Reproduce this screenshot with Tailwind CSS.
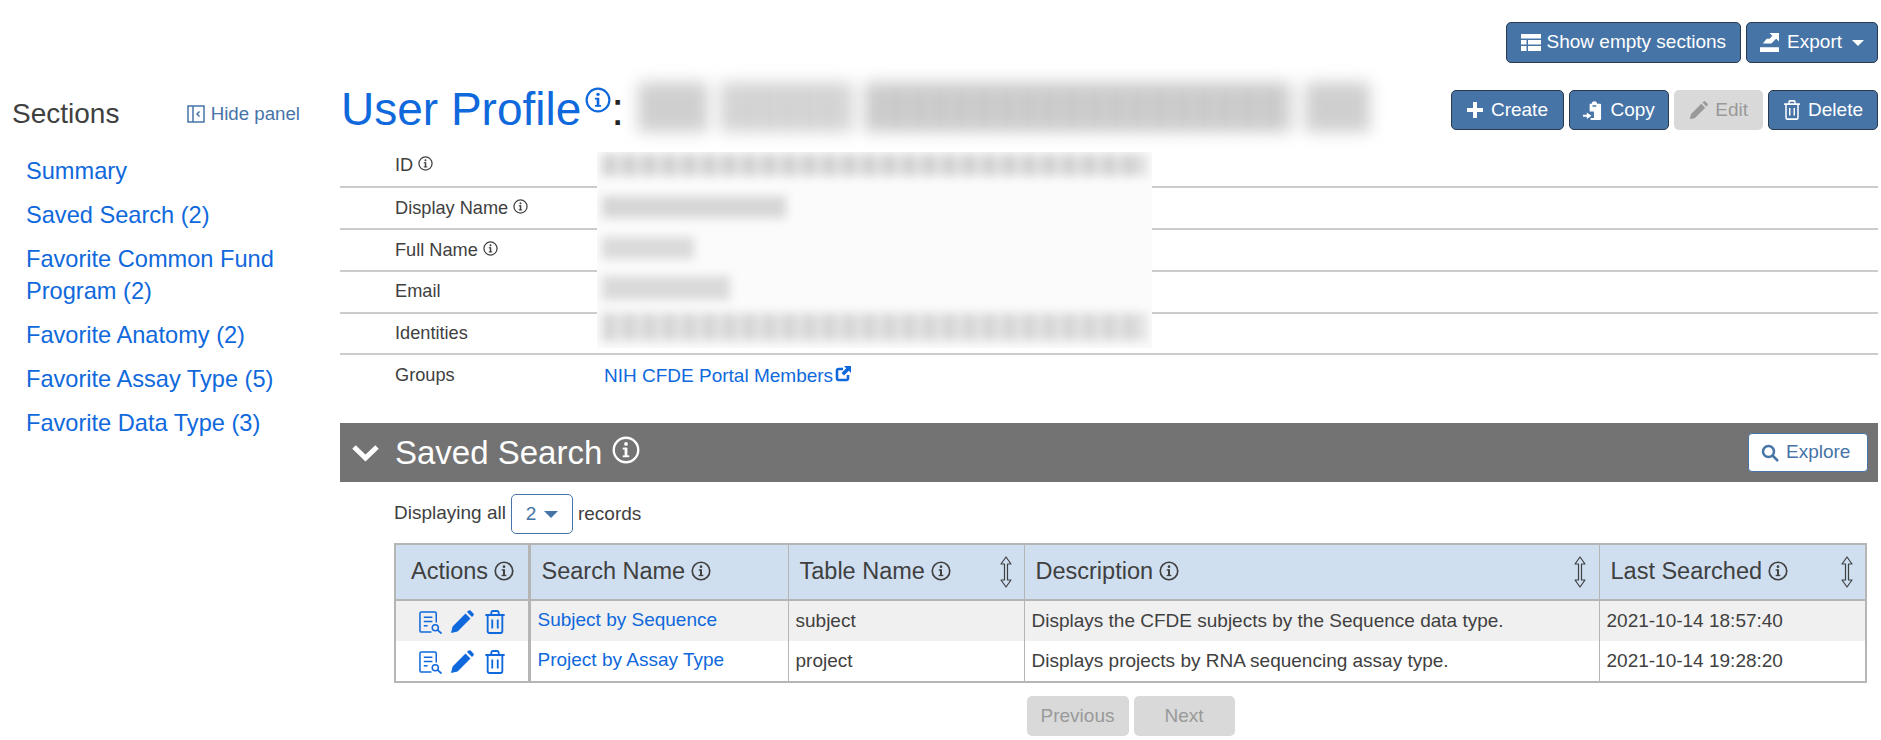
<!DOCTYPE html>
<html lang="en">
<head>
    <meta charset="UTF-8">
    <title>User Profile</title>
    <script src="https://cdn.jsdelivr.net/npm/@tailwindcss/browser@4"></script>
</head>
<body class="bg-white font-['Liberation_Sans',Arial,sans-serif] text-[19px] text-[#404040] overflow-hidden">
    <!-- shared icons -->
    <svg class="hidden">
        <symbol id="info" viewBox="0 0 24 24">
            <circle cx="12" cy="12" r="10.5" fill="none" stroke="currentColor" stroke-width="2"/>
            <rect x="10.8" y="10" width="2.4" height="8" fill="currentColor"/>
            <rect x="9.2" y="10" width="3" height="1.6" fill="currentColor"/>
            <rect x="9.2" y="16.6" width="5.6" height="1.6" fill="currentColor"/>
            <circle cx="12" cy="6.8" r="1.6" fill="currentColor"/>
        </symbol>
        <symbol id="pencil" viewBox="0 0 24 24">
            <path fill="currentColor" d="M1 23l1.6-6.6L15.5 3.5l5 5L7.6 21.4zM17 2l1.6-1.4a1.5 1.5 0 0 1 2 0l2.8 2.8a1.5 1.5 0 0 1 0 2L22 7z"/>
        </symbol>
        <symbol id="trash" viewBox="0 0 24 24" preserveAspectRatio="none">
            <path fill="none" stroke="currentColor" stroke-width="2" d="M1.5 5h21M8 5V2.500A1.500 1.500 0 0 1 9.500 1h5A1.500 1.500 0 0 1 16 2.500V5M4 5v16a2 2 0 0 0 2 2h12a2 2 0 0 0 2-2V5M9 9.500v9M15 9.500v9"/>
        </symbol>
        <symbol id="view" viewBox="0 0 24 24">
            <path fill="none" stroke="currentColor" stroke-width="1.6" d="M13 22H2.500A1.500 1.500 0 0 1 1 20.500V2.500A1.500 1.500 0 0 1 2.500 1h14A1.500 1.500 0 0 1 18 2.500V12M5 6.500h9M5 11h9M5 15.500h4"/>
            <circle cx="17" cy="17.500" r="3.200" fill="none" stroke="currentColor" stroke-width="1.600"/>
            <path stroke="currentColor" stroke-width="1.800" d="M19.500 20l4 3.500"/>
        </symbol>
        <symbol id="sort" viewBox="0 0 14 32">
            <path fill="none" stroke="currentColor" stroke-width="1.200" stroke-linejoin="round" d="M7 1L2 8h3.500v16H2l5 7 5-7H8.500V8H12z"/>
        </symbol>
    </svg>

    <div class="flex w-[1881px] h-[740px]">
        <!-- Sections panel -->
        <aside class="w-[340px] shrink-0 pt-[97px]">
            <div class="flex items-center justify-between pl-3 pr-[40px] h-[34px]">
                <h2 class="text-[28px]">Sections</h2>
                <a class="flex items-center gap-[6px] text-[#4674a7] text-[18.700px]">
                    <svg class="w-[18px] h-[18px]" viewBox="0 0 18 18" fill="none" stroke="currentColor" stroke-width="1.500">
                        <rect x="1" y="1" width="16" height="16"/><path d="M6 1v16M12.500 6.500l-2.500 2.500 2.500 2.500"/>
                    </svg>
                    Hide panel
                </a>
            </div>
            <nav class="mt-[24px] pl-[26px] pr-[14px] flex flex-col gap-[12px] text-[23.600px] leading-[32px] text-[#0f69dc]">
                <a>Summary</a>
                <a>Saved Search (2)</a>
                <a>Favorite Common Fund Program (2)</a>
                <a>Favorite Anatomy (2)</a>
                <a>Favorite Assay Type (5)</a>
                <a>Favorite Data Type (3)</a>
            </nav>
        </aside>

        <main class="flex-1 pr-[3px] min-w-0">
            <!-- Page level buttons -->
            <div class="flex justify-end gap-[5px] pt-[22px] h-[90px]">
                <button class="flex items-center gap-[6px] h-[41px] px-[14px] bg-[#4674a7] border border-[#2b3b4d] rounded-[5px] text-white">
                    <svg class="w-5 h-[17px]" viewBox="0 0 20 17" fill="currentColor"><path d="M0 0h20v4.500H0zM0 6h5.500v4.500H0zM7 6h13v4.500H7zM0 12h5.500v5H0zM7 12h13v5H7z"/></svg>
                    Show empty sections
                </button>
                <button class="flex items-center gap-[8px] h-[41px] px-[13px] bg-[#4674a7] border border-[#2b3b4d] rounded-[5px] text-white">
                    <svg class="w-[19px] h-[19px]" viewBox="0 0 20 20" fill="currentColor"><path d="M0 15h20v5H0zM20 0v9l-3-3-5 5H3l4-5h3l3-3-3-3z"/></svg>
                    Export
                    <span class="w-0 h-0 ml-[2px] border-x-[6px] border-x-transparent border-t-[6px] border-t-white"></span>
                </button>
            </div>

            <!-- Title -->
            <div class="flex items-start justify-between pl-[1px] h-[60px]">
                <div class="flex items-start">
                    <h1 class="text-[46px] leading-[64px] text-[#0f69dc] -mt-[13px]">User Profile</h1>
                    <svg class="w-[26px] h-[26px] -mt-[3px] ml-[4px] text-[#0f69dc]"><use href="#info"/></svg>
                    <span class="text-[46px] leading-[64px] -mt-[13px] text-[#222]">:</span>
                    <div class="ml-[14px] -mt-[8px] flex gap-[14px] h-[50px] w-[732px] blur-[8px]">
                        <div class="w-[70px] bg-[#cfcfcf]"></div>
                        <div class="w-[130px] bg-[repeating-linear-gradient(90deg,#cbcbcb_0,#cbcbcb_14px,#e8e8e8_14px,#e8e8e8_20px)]"></div>
                        <div class="flex-1 bg-[repeating-linear-gradient(90deg,#c4c4c4_0,#c4c4c4_16px,#dedede_16px,#dedede_22px)]"></div>
                        <div class="w-[65px] bg-[#cfcfcf]"></div>
                    </div>
                </div>
                <div class="flex gap-[5px]">
                    <button class="flex items-center gap-[8px] h-[40px] px-[15px] bg-[#4674a7] border border-[#2b3b4d] rounded-[5px] text-white">
                        <svg class="w-4 h-4" viewBox="0 0 16 16" fill="currentColor"><path d="M6 0h4v6h6v4h-6v6H6v-6H0V6h6z"/></svg>
                        Create
                    </button>
                    <button class="flex items-center gap-[8px] h-[40px] px-[13.500px] bg-[#4674a7] border border-[#2b3b4d] rounded-[5px] text-white">
                        <svg class="w-[19px] h-[19px]" viewBox="0 0 20 20" fill="currentColor"><path fill-rule="evenodd" d="M7 3h2.200a2.800 2.800 0 0 1 5.600 0H18a1 1 0 0 1 1 1v15a1 1 0 0 1-1 1H8v-2h3.500v-7H7zM10 4.500h4V6h-4z"/><path d="M0 14.500h4V12l5 3.500L4 19v-2.500H0z"/></svg>
                        Copy
                    </button>
                    <button class="flex items-center gap-[7px] h-[40px] px-[15px] bg-[#d9d9d9] rounded-[5px] text-[#999]">
                        <svg class="w-[19px] h-[19px]"><use href="#pencil"/></svg>
                        Edit
                    </button>
                    <button class="flex items-center gap-[7px] h-[40px] px-[14px] bg-[#4674a7] border border-[#2b3b4d] rounded-[5px] text-white">
                        <svg class="w-[18px] h-[20px]"><use href="#trash"/></svg>
                        Delete
                    </button>
                </div>
            </div>

            <!-- Record details -->
            <div class="relative mt-[-4px] text-[18.200px]">
                <div class="flex items-center h-[42px] pl-[55px] border-b-2 border-[#ccc] pt-[1px]">
                    <span class="flex items-center gap-[5px] w-[209px] -mt-[1px]">ID <svg class="w-[15px] h-[15px] -mt-1"><use href="#info"/></svg></span>
                </div>
                <div class="flex items-center h-[42px] pl-[55px] border-b-2 border-[#ccc] pt-[1px]">
                    <span class="flex items-center gap-[5px] w-[209px]">Display Name <svg class="w-[15px] h-[15px] -mt-1"><use href="#info"/></svg></span>
                </div>
                <div class="flex items-center h-[42px] pl-[55px] border-b-2 border-[#ccc] pt-[1px]">
                    <span class="flex items-center gap-[5px] w-[209px]">Full Name <svg class="w-[15px] h-[15px] -mt-1"><use href="#info"/></svg></span>
                </div>
                <div class="flex items-center h-[42px] pl-[55px] border-b-2 border-[#ccc]">
                    <span class="w-[209px]">Email</span>
                </div>
                <div class="flex items-center h-[41px] pl-[55px] border-b-2 border-[#ccc]">
                    <span class="w-[209px]">Identities</span>
                </div>
                <div class="flex items-center h-[42px] pl-[55px]">
                    <span class="w-[209px]">Groups</span>
                    <a class="flex items-center gap-[2px] text-[19px] text-[#0f69dc]">NIH CFDE Portal Members
                        <svg class="w-[16px] h-[16px] -mt-1" viewBox="0 0 16 16"><path fill="none" stroke="currentColor" stroke-width="2.600" d="M8 3H3.500A1.500 1.500 0 0 0 2 4.500v8A1.500 1.500 0 0 0 3.500 14h8a1.500 1.500 0 0 0 1.500-1.500V9"/><path fill="currentColor" d="M9 0h7v7l-2.200-2.200L9 9.500 6.500 7l4.700-4.800z"/></svg>
                    </a>
                </div>
                <!-- blurred out values -->
                <div class="absolute left-[257px] top-[6px] w-[555px] h-[196px] bg-[#fbfbfb] overflow-hidden">
                    <div class="h-[22px] w-[544px] ml-[5px] mt-[2px] blur-[5px] bg-[repeating-linear-gradient(90deg,#d2d2d2_0,#d2d2d2_14px,#e6e6e6_14px,#e6e6e6_20px)]"></div>
                    <div class="h-[22px] w-[184px] ml-[5px] mt-[20px] blur-[5px] bg-[#d6d6d6]"></div>
                    <div class="h-[22px] w-[92px] ml-[5px] mt-[19px] blur-[5px] bg-[#dadada]"></div>
                    <div class="h-[24px] w-[128px] ml-[5px] mt-[17px] blur-[5px] bg-[#dadada]"></div>
                    <div class="h-[28px] w-[544px] ml-[5px] mt-[13px] blur-[5px] bg-[repeating-linear-gradient(90deg,#d6d6d6_0,#d6d6d6_14px,#e8e8e8_14px,#e8e8e8_20px)]"></div>
                </div>
            </div>

            <!-- Saved Search section -->
            <section class="mt-[26px]">
                <div class="flex items-center justify-between h-[59px] bg-[#737373] text-white pl-[11px] pr-[10px]">
                    <div class="flex items-center">
                        <svg class="w-[29px] h-[18px]" viewBox="0 0 29 18" fill="none" stroke="currentColor" stroke-width="5"><path d="M3 3l11.500 11L26 3"/></svg>
                        <h2 class="ml-[15px] text-[33px]">Saved Search</h2>
                        <svg class="w-[28px] h-[28px] ml-[10px] -mt-[6px]"><use href="#info"/></svg>
                    </div>
                    <button class="flex items-center gap-[7px] w-[120px] h-[39px] px-[12px] bg-white border border-[#4674a7] rounded-[4px] text-[#4674a7]">
                        <svg class="w-[18px] h-[18px]" viewBox="0 0 18 18" fill="none" stroke="currentColor" stroke-width="2.500"><circle cx="7.500" cy="7.500" r="5.500"/><path d="M11.500 11.500L17 17"/></svg>
                        Explore
                    </button>
                </div>

                <div class="pl-[54px] pr-[11px]">
                    <div class="flex items-center h-[61px] pt-[3px]">
                        <span class="-mt-[2px]">Displaying all</span>
                        <span class="flex items-center justify-center gap-[8px] w-[62px] h-[40px] ml-[5px] mr-[5px] border border-[#4674a7] rounded-[5px] text-[#4674a7]">2
                            <span class="w-0 h-0 border-x-[7px] border-x-transparent border-t-[7px] border-t-[#4674a7]"></span>
                        </span>
                        <span>records</span>
                    </div>

                    <table class="w-[1473px] table-fixed border-collapse border-2 border-[#b5b5b5]">
                        <thead class="bg-[#cfdff0] text-[23.500px]">
                            <tr class="h-[56px]">
                                <th class="w-[134px] font-normal text-left pl-[15px] border-r-3 border-[#b5b5b5]">
                                    <span class="flex items-center gap-[6px]">Actions <svg class="w-[20px] h-[20px] -mt-[3px]"><use href="#info"/></svg></span>
                                </th>
                                <th class="w-[259px] font-normal text-left pl-[11px] border-r border-[#b5b5b5]">
                                    <span class="flex items-center gap-[6px]">Search Name <svg class="w-[20px] h-[20px] -mt-[3px]"><use href="#info"/></svg></span>
                                </th>
                                <th class="w-[236px] font-normal text-left pl-[11px] border-r border-[#b5b5b5]">
                                    <span class="flex items-center gap-[6px] pr-[11px]">Table Name <svg class="w-[20px] h-[20px] -mt-[3px]"><use href="#info"/></svg><svg class="w-[14px] h-[32px] ml-auto"><use href="#sort"/></svg></span>
                                </th>
                                <th class="w-[575px] font-normal text-left pl-[11px] border-r border-[#b5b5b5]">
                                    <span class="flex items-center gap-[6px] pr-[12px]">Description <svg class="w-[20px] h-[20px] -mt-[3px]"><use href="#info"/></svg><svg class="w-[14px] h-[32px] ml-auto"><use href="#sort"/></svg></span>
                                </th>
                                <th class="font-normal text-left pl-[11px]">
                                    <span class="flex items-center gap-[6px] pr-[11px]">Last Searched <svg class="w-[20px] h-[20px] -mt-[3px]"><use href="#info"/></svg><svg class="w-[14px] h-[32px] ml-auto"><use href="#sort"/></svg></span>
                                </th>
                            </tr>
                        </thead>
                        <tbody class="border-t-2 border-[#b5b5b5]">
                            <tr class="h-[41px] bg-[#f0f0f0]">
                                <td class="border-r-3 border-[#b5b5b5] text-[#0f69dc]">
                                    <div class="flex items-center justify-center pl-[2px] pt-[2px]">
                                        <svg class="w-[23px] h-[23px] mr-[8px]"><use href="#view"/></svg>
                                        <svg class="w-[24px] h-[24px] mr-[10px]"><use href="#pencil"/></svg>
                                        <svg class="w-[22px] h-[24px]"><use href="#trash"/></svg>
                                    </div>
                                </td>
                                <td class="pl-[7px] border-r border-[#b5b5b5] text-[#0f69dc] pb-[1px]">Subject by Sequence</td>
                                <td class="pl-[7px] border-r border-[#b5b5b5]">subject</td>
                                <td class="pl-[7px] border-r border-[#b5b5b5]">Displays the CFDE subjects by the Sequence data type.</td>
                                <td class="pl-[7px]">2021-10-14 18:57:40</td>
                            </tr>
                            <tr class="h-[41px] bg-white">
                                <td class="border-r-3 border-[#b5b5b5] text-[#0f69dc]">
                                    <div class="flex items-center justify-center pl-[2px] pt-[2px]">
                                        <svg class="w-[23px] h-[23px] mr-[8px]"><use href="#view"/></svg>
                                        <svg class="w-[24px] h-[24px] mr-[10px]"><use href="#pencil"/></svg>
                                        <svg class="w-[22px] h-[24px]"><use href="#trash"/></svg>
                                    </div>
                                </td>
                                <td class="pl-[7px] border-r border-[#b5b5b5] text-[#0f69dc] pb-[1px]">Project by Assay Type</td>
                                <td class="pl-[7px] border-r border-[#b5b5b5]">project</td>
                                <td class="pl-[7px] border-r border-[#b5b5b5]">Displays projects by RNA sequencing assay type.</td>
                                <td class="pl-[7px]">2021-10-14 19:28:20</td>
                            </tr>
                        </tbody>
                    </table>

                    <div class="flex justify-center gap-[5px] mt-[13px]">
                        <button class="w-[102px] h-[40px] bg-[#d9d9d9] rounded-[5px] text-[#999]">Previous</button>
                        <button class="w-[101px] h-[40px] bg-[#d9d9d9] rounded-[5px] text-[#999]">Next</button>
                    </div>
                </div>
            </section>
        </main>
    </div>
</body>
</html>
